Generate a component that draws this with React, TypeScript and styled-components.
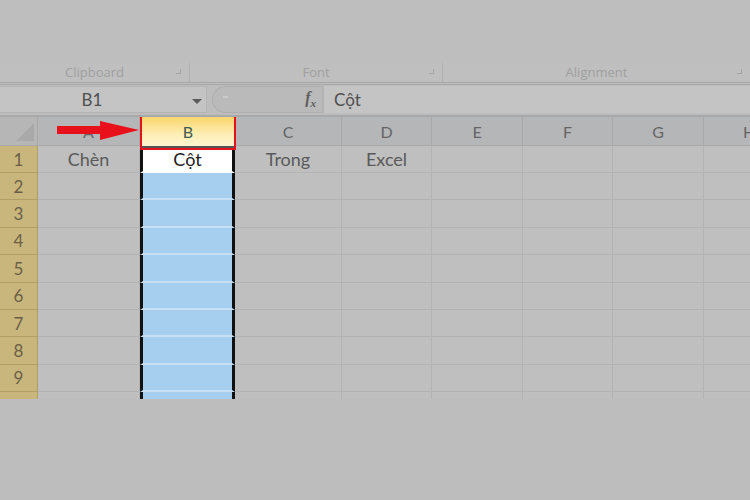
import { FC } from "react";
import styled, { createGlobalStyle } from "styled-components";

const COLS = [
  { name: "A", width: 102 },
  { name: "B", width: 95 },
  { name: "C", width: 107 },
  { name: "D", width: 90 },
  { name: "E", width: 91 },
  { name: "F", width: 90 },
  { name: "G", width: 91 },
  { name: "H", width: 91 },
];

const ROW1: Record<string, string> = {
  A: "Chèn",
  B: "Cột",
  C: "Trong",
  D: "Excel",
};

const ROWS = [1, 2, 3, 4, 5, 6, 7, 8, 9, 10];
const SELECTED = "B";

const GlobalStyle = createGlobalStyle`
  html, body {
    margin: 0;
    padding: 0;
    background: #bdbdbd;
  }
  * { box-sizing: border-box; }
`;

const App: FC = () => {
  const template = `38px ${COLS.map((c) => `${c.width}px`).join(" ")}`;

  return (
    <$Page>
      <GlobalStyle />
      <$RibbonTop />
      <$GroupRow>
        <$Group $width={190}>
          <$GroupLabel>Clipboard</$GroupLabel>
          <$Launcher />
        </$Group>
        <$Group $width={253}>
          <$GroupLabel>Font</$GroupLabel>
          <$Launcher />
        </$Group>
        <$Group $width={307}>
          <$GroupLabel>Alignment</$GroupLabel>
          <$Launcher />
        </$Group>
      </$GroupRow>

      <$FormulaBar>
        <$NameBox>
          <$NameText>B1</$NameText>
          <$DropArrow />
        </$NameBox>
        <$FxPill>
          <$PillDot />
          <$Fx>
            f<sub>x</sub>
          </$Fx>
        </$FxPill>
        <$FormulaInput>Cột</$FormulaInput>
      </$FormulaBar>

      <$Sheet>
        <$Grid $template={template}>
          <$Corner>
            <svg width="38" height="28" viewBox="0 0 38 28">
              <polygon points="16,24 34,24 34,6" fill="#a9a9a9" />
            </svg>
          </$Corner>
          {COLS.map((c) =>
            c.name === SELECTED ? (
              <$ColHeadSelected key={c.name}>{c.name}</$ColHeadSelected>
            ) : (
              <$ColHead key={c.name}>{c.name}</$ColHead>
            )
          )}
          {ROWS.map((r) => (
            <Row key={r} row={r} />
          ))}
        </$Grid>
        <$Arrow>
          <svg width="82" height="20" viewBox="0 0 82 20">
            <rect x="0" y="5" width="44" height="8" fill="#e8101a" />
            <polygon points="43,0 82,9 43,19" fill="#e8101a" />
          </svg>
        </$Arrow>
      </$Sheet>
    </$Page>
  );
};

const Row: FC<{ row: number }> = ({ row }) => (
  <>
    <$RowHead>{row}</$RowHead>
    {COLS.map((c) => {
      const text = row === 1 ? ROW1[c.name] : undefined;
      if (c.name === SELECTED)
        return (
          <$SelCell key={c.name} $active={row === 1}>
            {text}
          </$SelCell>
        );
      return <$Cell key={c.name}>{text}</$Cell>;
    })}
  </>
);

const $Page = styled.div`
  width: 750px;
  height: 500px;
  overflow: hidden;
  background: #bdbdbd;
  font-family: Lato, "Liberation Sans", sans-serif;
  color: #585858;
`;

const $RibbonTop = styled.div`
  height: 63px;
  background: #bebebe;
`;

const $GroupRow = styled.div`
  display: flex;
  height: 22px;
  background: #bfbfbf;
  border-bottom: 3px double #a6a6a6;
`;

const $Group = styled.div<{ $width: number }>`
  position: relative;
  width: ${({ $width }) => $width}px;
  display: flex;
  justify-content: center;
  align-items: flex-start;
  border-right: 1px solid #b0b0b0;
  &:last-child {
    border-right: none;
  }
`;

const $GroupLabel = styled.span`
  font-family: "Open Sans", sans-serif;
  font-size: 13px;
  line-height: 16px;
  margin-top: 1px;
  color: #a0a0a0;
`;

const $Launcher = styled.span`
  position: absolute;
  right: 8px;
  top: 6px;
  width: 5px;
  height: 5px;
  border-right: 1px solid #a4a4a4;
  border-bottom: 1px solid #a4a4a4;
`;

const $FormulaBar = styled.div`
  display: flex;
  align-items: stretch;
  height: 32px;
  padding: 1px 0 2px;
  background: #bdbdbd;
  border-bottom: 2px solid #a9a9a9;
`;

const $NameBox = styled.div`
  width: 207px;
  display: flex;
  align-items: center;
  justify-content: center;
  position: relative;
  background: #c4c4c4;
  border: 1px solid #b4b4b4;
  border-left: none;
`;

const $NameText = styled.span`
  font-size: 17px;
  margin-left: -22px;
  color: #505050;
`;

const $DropArrow = styled.span`
  position: absolute;
  right: 4px;
  top: 12px;
  width: 0;
  height: 0;
  border-left: 5px solid transparent;
  border-right: 5px solid transparent;
  border-top: 5px solid #5a5a5a;
`;

const $FxPill = styled.div`
  width: 110px;
  margin-left: 5px;
  display: flex;
  align-items: center;
  justify-content: space-between;
  padding: 0 6px 0 10px;
  background: #bababa;
  border: 1px solid #aeaeae;
  border-right: none;
  border-radius: 14px 0 0 14px;
`;

const $PillDot = styled.span`
  width: 5px;
  height: 2px;
  background: #cacaca;
  margin-top: -6px;
`;

const $Fx = styled.span`
  font-family: "Liberation Serif", serif;
  font-style: italic;
  font-weight: bold;
  font-size: 16px;
  color: #5e5e5e;
  sub {
    font-size: 11px;
  }
`;

const $FormulaInput = styled.div`
  flex: 1;
  display: flex;
  align-items: center;
  padding-left: 10px;
  font-size: 17px;
  color: #4f4f4f;
  background: #c4c4c4;
  border-left: 2px solid #b2b2b2;
`;

const $Sheet = styled.div`
  position: relative;
  height: 282px;
  overflow: hidden;
`;

const $Grid = styled.div<{ $template: string }>`
  display: grid;
  grid-template-columns: ${({ $template }) => $template};
  grid-template-rows: 29px 27px;
  grid-auto-rows: 27.4px;
`;

const $Corner = styled.div`
  background: #b6b6b7;
  border-right: 1px solid #a8a8a8;
  border-bottom: 1px solid #a8a8a8;
  svg {
    display: block;
  }
`;

const $ColHead = styled.div`
  display: flex;
  align-items: center;
  justify-content: center;
  font-size: 16px;
  color: #656565;
  background: #b5b6b8;
  border-right: 1px solid #a9a9aa;
  border-bottom: 1px solid #a9a9aa;
`;

const $ColHeadSelected = styled($ColHead)`
  position: relative;
  z-index: 2;
  margin: -2px -1px -4px 0;
  background: linear-gradient(#f9d56c, #fdeeb4 55%, #fff6d8);
  border: 2px solid #e8111b;
  box-shadow: inset 0 -2px 0 #555;
  color: #3f5a4e;
  padding-bottom: 2px;
`;

const $RowHead = styled.div`
  display: flex;
  align-items: center;
  justify-content: center;
  font-size: 17px;
  color: #6b6047;
  background: #c9b67c;
  border-right: 1px solid #b19e66;
  border-bottom: 1px solid #b19e66;
`;

const $Cell = styled.div`
  display: flex;
  align-items: center;
  justify-content: center;
  font-size: 18px;
  color: #5a5a5a;
  background: #bfbfbf;
  border-right: 1px solid #b3b3b3;
  border-bottom: 1px solid #b3b3b3;
`;

const $SelCell = styled.div<{ $active: boolean }>`
  display: flex;
  align-items: center;
  justify-content: center;
  font-size: 18px;
  color: #222;
  background: ${({ $active }) => ($active ? "#ffffff" : "#a5ceef")};
  border-left: 3px solid #111;
  border-right: 3px solid #111;
  border-bottom: 2px solid ${({ $active }) => ($active ? "#ffffff" : "#c8def2")};
`;

const $Arrow = styled.div`
  position: absolute;
  left: 57px;
  top: 4px;
  z-index: 3;
  svg {
    display: block;
  }
`;

export default App;
